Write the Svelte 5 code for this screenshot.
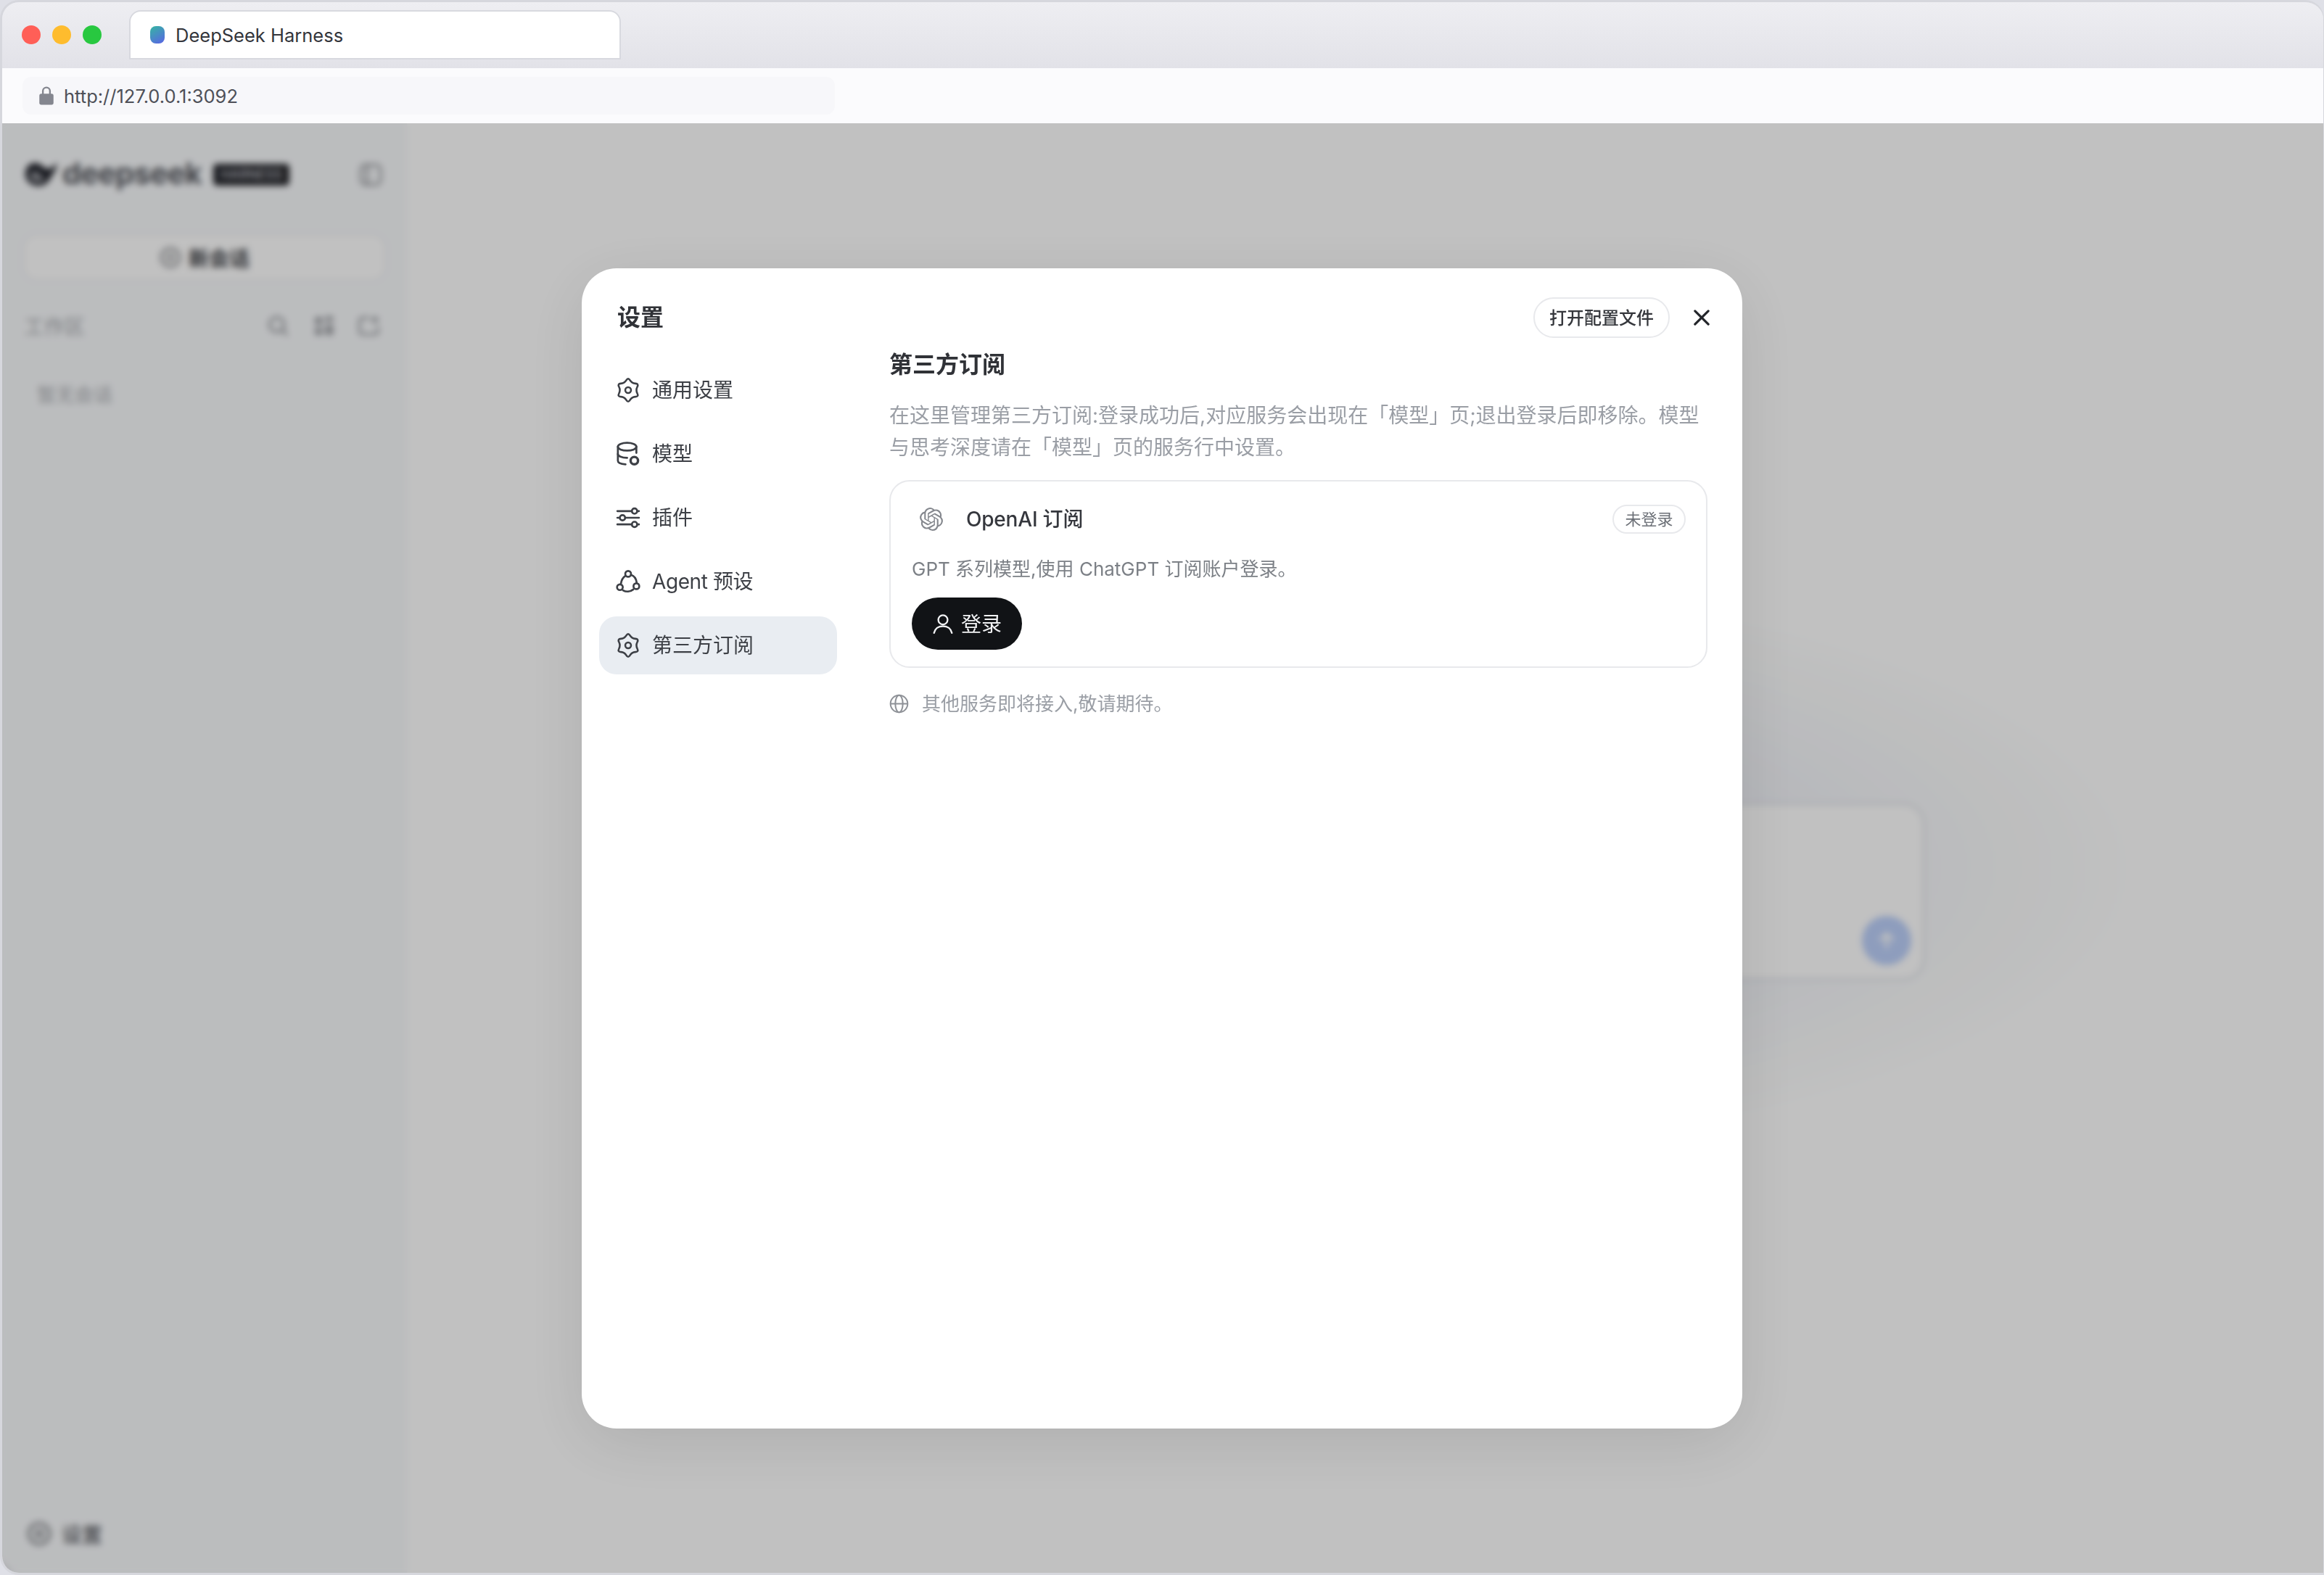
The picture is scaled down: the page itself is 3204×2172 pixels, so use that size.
<script>
  // six lobed settings outline, closed quadratic spline through tips and pinches
  const gearPath = (() => {
    const pts = [];
    for (let i = 0; i < 12; i++) {
      const r = i % 2 === 0 ? 12.6 : 7.6;
      const a = ((-90 + i * 30) * Math.PI) / 180;
      pts.push([12 + r * Math.cos(a) * 0.96, 12 + r * Math.sin(a)]);
    }
    const mid = (p, q) => [(p[0] + q[0]) / 2, (p[1] + q[1]) / 2];
    let start = mid(pts[11], pts[0]);
    let d = `M${start[0].toFixed(2)} ${start[1].toFixed(2)}`;
    pts.forEach((p, i) => {
      const m = mid(p, pts[(i + 1) % 12]);
      d += `Q${p[0].toFixed(2)} ${p[1].toFixed(2)} ${m[0].toFixed(2)} ${m[1].toFixed(2)}`;
    });
    return d + "Z";
  })();

  const openaiPath =
    "M22.2819 9.8211a5.9847 5.9847 0 0 0-.5157-4.9108 6.0462 6.0462 0 0 0-6.5098-2.9A6.0651 6.0651 0 0 0 4.9807 4.1818a5.9847 5.9847 0 0 0-3.9977 2.9 6.0462 6.0462 0 0 0 .7427 7.0966 5.98 5.98 0 0 0 .511 4.9107 6.051 6.051 0 0 0 6.5146 2.9001A5.9847 5.9847 0 0 0 13.2599 24a6.0557 6.0557 0 0 0 5.7718-4.2058 5.9894 5.9894 0 0 0 3.9977-2.9001 6.0557 6.0557 0 0 0-.7475-7.0729zm-9.022 12.6081a4.4755 4.4755 0 0 1-2.8764-1.0408l.1419-.0804 4.7783-2.7582a.7948.7948 0 0 0 .3927-.6813v-6.7369l2.02 1.1686a.071.071 0 0 1 .038.052v5.5826a4.504 4.504 0 0 1-4.4945 4.4944zm-9.6607-4.1254a4.4708 4.4708 0 0 1-.5346-3.0137l.142.0852 4.783 2.7582a.7712.7712 0 0 0 .7806 0l5.8428-3.3685v2.3324a.0804.0804 0 0 1-.0332.0615L9.74 19.9502a4.4992 4.4992 0 0 1-6.1408-1.6464zM2.3408 7.8956a4.485 4.485 0 0 1 2.3655-1.9728V11.6a.7664.7664 0 0 0 .3879.6765l5.8144 3.3543-2.0201 1.1685a.0757.0757 0 0 1-.071 0l-4.8303-2.7865A4.504 4.504 0 0 1 2.3408 7.872zm16.5963 3.8558L13.1038 8.364 15.1192 7.2a.0757.0757 0 0 1 .071 0l4.8303 2.7913a4.4944 4.4944 0 0 1-.6765 8.1042v-5.6772a.79.79 0 0 0-.407-.667zm2.0107-3.0231l-.142-.0852-4.7735-2.7818a.7759.7759 0 0 0-.7854 0L9.409 9.2297V6.8974a.0662.0662 0 0 1 .0284-.0615l4.8303-2.7866a4.4992 4.4992 0 0 1 6.6802 4.66zM8.3065 12.863l-2.02-1.1638a.0804.0804 0 0 1-.038-.0567V6.0742a4.4992 4.4992 0 0 1 7.3757-3.4537l-.142.0805L8.704 5.459a.7948.7948 0 0 0-.3927.6813zm1.0976-2.3654l2.602-1.4998 2.6069 1.4998v2.9994l-2.5974 1.4997-2.6067-1.4997Z";
</script>

{#snippet gear(cls)}
  <svg class={cls} viewBox="0 0 24 24" fill="none" stroke="currentColor" stroke-width="1.8">
    <path d={gearPath} />
    <circle cx="12" cy="12" r="2.8" />
  </svg>
{/snippet}

<div class="window">
  <header class="titlebar">
    <div class="lights">
      <span class="light red"></span>
      <span class="light yellow"></span>
      <span class="light green"></span>
    </div>
    <div class="tab">
      <span class="favicon"></span>
      <span>DeepSeek Harness</span>
    </div>
  </header>

  <div class="addressbar">
    <div class="urlfield">
      <svg class="lock" viewBox="0 0 20 24" fill="none">
        <path d="M5.500 11V6a4.500 4.500 0 0 1 9 0V11" stroke="#84868f" stroke-width="2.2" />
        <rect x="1" y="9.500" width="18" height="14" rx="2.500" fill="#84868f" />
      </svg>
      <span>http://127.0.0.1:3092</span>
    </div>
  </div>

  <div class="app">
    <aside class="sidebar">
      <div class="brand">
        <svg class="whale" viewBox="0 0 44 36">
          <path d="M1 15C2 6 9 1 17 3c5 1 8 6 12 7 5 1 9-3 14-8-1 8-4 14-8 18-3 10-13 15-22 12C5 30 0 23 1 15z" fill="#20222a" />
          <path d="M7 18c2-5 7-6 11-3 3 3 6 7 9 9-5 4-12 5-16 2-3-2-5-5-4-8z" fill="#8c8e94" />
        </svg>
        <span class="wordmark">deepseek</span>
        <span class="badge">HARNESS</span>
        <svg class="side-toggle" viewBox="0 0 24 24" fill="none" stroke="#8b8d92" stroke-width="2">
          <rect x="3" y="3" width="18" height="18" rx="4" />
          <path d="M9 3v18" />
        </svg>
      </div>
      <button class="new-chat">
        <svg viewBox="0 0 24 24" fill="none" stroke="#6d6f74" stroke-width="2.2">
          <circle cx="12" cy="12" r="10" />
          <path d="M12 8v8M8 12h8" />
        </svg>
        <span>新会话</span>
      </button>
      <div class="section-row">
        <span>工作区</span>
        <div class="section-tools">
          <svg viewBox="0 0 24 24" fill="none" stroke="#94969b" stroke-width="2.4">
            <circle cx="11" cy="11" r="7.500" />
            <path d="M17 17l5 5" />
          </svg>
          <svg viewBox="0 0 24 24" fill="#a0a2a7">
            <rect x="3" y="3" width="8" height="8" rx="2" />
            <rect x="14" y="2" width="8" height="6" rx="2" />
            <rect x="3" y="14" width="8" height="8" rx="2" />
            <rect x="14" y="11" width="8" height="11" rx="2" />
          </svg>
          <svg viewBox="0 0 24 24" fill="none" stroke="#94969b" stroke-width="2.4">
            <path d="M21 13v5a3 3 0 0 1-3 3H5a3 3 0 0 1-3-3V7a3 3 0 0 1 3-3h7" />
            <path d="M18 2v8M14 6h8" />
          </svg>
        </div>
      </div>
      <div class="empty">暂无会话</div>
      <div class="side-footer">
        <svg viewBox="0 0 24 24" fill="none" stroke="#6d6f74" stroke-width="2.4">
          <circle cx="12" cy="12" r="10" />
          <circle cx="12" cy="12" r="2.500" />
        </svg>
        <span>设置</span>
      </div>
    </aside>

    <main class="workspace">
      <div class="glow"></div>
      <div class="composer">
        <button class="send" aria-label="发送">
          <svg viewBox="0 0 24 24" fill="none" stroke="#fff" stroke-width="3">
            <path d="M12 20V5M5 12l7-7 7 7" />
          </svg>
        </button>
      </div>
    </main>

    <div class="overlay">
      <div class="modal">
        <nav class="nav">
          <h2>设置</h2>
          <div class="nav-list">
            <div class="nav-item">
              {@render gear("nav-icon")}
              <span>通用设置</span>
            </div>
            <div class="nav-item">
              <svg class="nav-icon" viewBox="0 0 24 24" fill="none" stroke="currentColor" stroke-width="1.9" stroke-linecap="round">
                <ellipse cx="11" cy="5" rx="9" ry="3.800" />
                <path d="M2 5v13.500c0 2 3 3.400 7.500 3.600" />
                <path d="M20 5v6" />
                <path d="M2 12c0 2 3.600 3.800 9 3.800" />
                <circle cx="18" cy="18.500" r="3.600" stroke-width="2.400" />
              </svg>
              <span>模型</span>
            </div>
            <div class="nav-item">
              <svg class="nav-icon" viewBox="0 0 24 24" fill="none" stroke="currentColor" stroke-width="1.9" stroke-linecap="round">
                <path d="M1.500 5.500h14M21 5.500h1.500M1.500 18.500h14M21 18.500h1.500M9.500 12h13M1.500 12h2" />
                <circle cx="18.200" cy="5.500" r="2.600" />
                <circle cx="6.500" cy="12" r="2.600" />
                <circle cx="18.200" cy="18.500" r="2.600" />
              </svg>
              <span>插件</span>
            </div>
            <div class="nav-item agent">
              <svg class="nav-icon" viewBox="0 0 24 24" fill="none" stroke="currentColor" stroke-width="1.9" stroke-linecap="round">
                <circle cx="12" cy="4.500" r="2.800" />
                <circle cx="4" cy="17.500" r="2.800" />
                <circle cx="20" cy="16.500" r="2.800" />
                <path d="M9.300 6.500C7 8 5.500 10.500 5 14M14.800 5.500c3 1 5 3.500 5.500 7.500M7 20.500c3 1.800 7 1.600 10-.8" />
              </svg>
              <span>Agent 预设</span>
            </div>
            <div class="nav-item active">
              {@render gear("nav-icon")}
              <span>第三方订阅</span>
            </div>
          </div>
        </nav>

        <section class="pane">
          <div class="toolbar">
            <button class="open-config">打开配置文件</button>
            <button class="close" aria-label="关闭">
              <svg viewBox="0 0 24 24" fill="none" stroke="currentColor" stroke-width="3.400" stroke-linecap="round">
                <path d="M2 2l20 20M22 2L2 22" />
              </svg>
            </button>
          </div>
          <h3>第三方订阅</h3>
          <p class="intro">在这里管理第三方订阅:登录成功后,对应服务会出现在「模型」页;退出登录后即移除。模型与思考深度请在「模型」页的服务行中设置。</p>

          <div class="card">
            <div class="card-head">
              <svg class="openai" viewBox="0 0 24 24" fill="#85888e"><path d={openaiPath} /></svg>
              <span class="card-title">OpenAI 订阅</span>
              <span class="status">未登录</span>
            </div>
            <p class="card-desc">GPT 系列模型,使用 ChatGPT 订阅账户登录。</p>
            <button class="login">
              <svg viewBox="0 0 24 24" fill="none" stroke="currentColor" stroke-width="2" stroke-linecap="round">
                <circle cx="12" cy="7.500" r="5.500" />
                <path d="M1.500 23c1-5 5-8 10.500-8s9.500 3 10.500 8" />
              </svg>
              <span>登录</span>
            </button>
          </div>

          <div class="more">
            <svg viewBox="0 0 24 24" fill="none" stroke="currentColor" stroke-width="1.800">
              <circle cx="12" cy="12" r="10.500" />
              <ellipse cx="12" cy="12" rx="4.600" ry="10.500" />
              <path d="M1.500 12h21" />
            </svg>
            <span>其他服务即将接入,敬请期待。</span>
          </div>
        </section>
      </div>
    </div>
  </div>
</div>

<style>
  :global(body) {
    background: #dfe0e7;
    font-family: Inter, "Noto Sans CJK SC", sans-serif;
  }

  .window {
    height: 2172px;
    display: flex;
    flex-direction: column;
    border-radius: 26px 26px 0 26px;
    border: 3px solid #d6d7dd;
    border-width: 3px 1px 3px 3px;
    box-sizing: border-box;
    overflow: hidden;
  }

  .titlebar {
    height: 91px;
    flex: none;
    display: flex;
    align-items: flex-end;
    background: linear-gradient(#eeeef2, #e2e2e8);
    padding-left: 27px;
    box-sizing: border-box;
  }

  .lights {
    display: flex;
    gap: 16px;
    align-self: center;
    margin-right: 38px;
    margin-top: -2px;
  }

  .light {
    width: 26px;
    height: 26px;
    border-radius: 50%;
  }

  .red {
    background: #ff5f57;
  }

  .yellow {
    background: #febc2e;
  }

  .green {
    background: #28c840;
  }

  .tab {
    width: 678px;
    height: 68px;
    margin-bottom: 12px;
    box-sizing: border-box;
    border: 2px solid #d8d9df;
    border-radius: 16px 16px 0 0;
    background: #fff;
    display: flex;
    align-items: center;
    gap: 15px;
    padding-left: 27px;
    font-size: 25.5px;
    color: #33353b;
  }

  .favicon {
    width: 20px;
    height: 24px;
    border-radius: 8px;
    background: linear-gradient(150deg, #35b6a2, #5a63e6);
  }

  .addressbar {
    height: 76px;
    flex: none;
    background: #fbfbfd;
    padding: 12px 0 12px 28px;
    box-sizing: border-box;
  }

  .urlfield {
    width: 1120px;
    height: 52px;
    border-radius: 12px;
    background: #f7f7fa;
    display: flex;
    align-items: center;
    gap: 13px;
    padding-left: 22px;
    box-sizing: border-box;
    font-size: 25.5px;
    color: #4e5058;
  }

  .lock {
    width: 22px;
    height: 26px;
  }

  .app {
    flex: 1;
    min-height: 0;
    display: flex;
    position: relative;
  }

  .sidebar {
    width: 558px;
    flex: none;
    background: #f8fafc;
    box-sizing: border-box;
    padding: 0 28px 34px;
    display: flex;
    flex-direction: column;
  }

  .brand {
    height: 142px;
    flex: none;
    display: flex;
    align-items: center;
    padding-left: 3px;
  }

  .whale {
    width: 46px;
    height: 42px;
    margin-right: 6px;
  }

  .wordmark {
    font-size: 41px;
    font-weight: 700;
    letter-spacing: -0.5px;
    color: #55575e;
    margin-top: -4px;
  }

  .badge {
    margin-left: 16px;
    width: 105px;
    height: 30px;
    border-radius: 5px;
    background: #24252a;
    color: #dcdee3;
    font-size: 18px;
    text-align: center;
    line-height: 30px;
  }

  .side-toggle {
    width: 36px;
    height: 36px;
    margin-left: auto;
    margin-right: 4px;
  }

  .new-chat {
    height: 66px;
    margin-top: 10px;
    flex: none;
    border: 2px solid #eaebef;
    border-radius: 20px;
    background: #fff;
    display: flex;
    align-items: center;
    justify-content: center;
    gap: 10px;
    font: inherit;
    font-size: 28px;
    font-weight: 600;
    color: #3c3e44;
  }

  .new-chat svg {
    width: 30px;
    height: 30px;
  }

  .section-row {
    margin-top: 31px;
    height: 60px;
    flex: none;
    display: flex;
    align-items: center;
    justify-content: space-between;
    font-size: 28px;
    color: #a3a5aa;
    padding-left: 2px;
  }

  .section-tools {
    display: flex;
    gap: 31px;
    margin-right: 8px;
  }

  .section-tools svg {
    width: 32px;
    height: 32px;
  }

  .empty {
    margin-top: 45px;
    padding-left: 20px;
    font-size: 26px;
    color: #a9abb0;
  }

  .side-footer {
    margin-top: auto;
    padding-left: 6px;
    display: flex;
    align-items: center;
    gap: 14px;
    font-size: 28px;
    font-weight: 500;
    color: #55575d;
  }

  .side-footer svg {
    width: 34px;
    height: 34px;
  }

  .workspace {
    flex: 1;
    background: #fff;
    display: flex;
    justify-content: center;
    padding-top: 937px;
    position: relative;
    overflow: hidden;
  }

  .glow {
    position: absolute;
    left: 250px;
    top: 627px;
    width: 2140px;
    height: 800px;
    border-radius: 50%;
    background: radial-gradient(closest-side, rgba(120, 135, 190, 0.1) 55%, rgba(130, 160, 170, 0.035) 85%, transparent);
  }

  .composer {
    width: 1544px;
    height: 245px;
    box-sizing: border-box;
    border-radius: 30px;
    background: #fff;
    border: 3px dashed #cdd2dd;
    position: relative;
    display: flex;
    justify-content: flex-end;
    align-items: flex-end;
    padding: 0 16px 18px 0;
  }

  .send {
    width: 68px;
    height: 68px;
    border: 0;
    border-radius: 50%;
    background: #bcd0fa;
    padding: 18px;
    display: flex;
  }

  .overlay {
    position: absolute;
    inset: 0;
    padding-right: 2px;
    background: rgba(0, 0, 0, 0.243);
    backdrop-filter: blur(5px);
    display: flex;
    align-items: center;
    justify-content: center;
  }

  .modal {
    width: 1600px;
    height: 1600px;
    background: #fff;
    border-radius: 48px;
    display: flex;
    box-shadow: 0 20px 90px rgba(0, 0, 0, 0.1);
    color: #2b2d33;
  }

  .nav {
    width: 376px;
    flex: none;
    box-sizing: border-box;
    padding: 40px 24px;
  }

  h2,
  h3 {
    margin: 0;
    font-size: 32px;
    font-weight: 600;
    color: #303237;
  }

  h2 {
    height: 56px;
    line-height: 56px;
    padding-left: 25px;
  }

  .nav-list {
    margin-top: 32px;
    display: flex;
    flex-direction: column;
    gap: 8px;
  }

  .nav-item {
    height: 80px;
    display: flex;
    align-items: center;
    gap: 16px;
    padding-left: 23px;
    border-radius: 24px;
    font-size: 28px;
    color: #3d4046;
  }

  .nav-item span {
    padding-bottom: 4px;
  }

  .nav-item.agent span {
    letter-spacing: -0.4px;
  }

  .nav-item.active {
    background: #e9edf2;
  }

  .nav :global(.nav-icon) {
    width: 34px;
    height: 34px;
    flex: none;
  }

  .pane {
    flex: 1;
    min-width: 0;
    box-sizing: border-box;
    padding: 40px 48px;
  }

  .toolbar {
    height: 56px;
    margin-right: -14px;
    display: flex;
    justify-content: flex-end;
    align-items: center;
    gap: 22px;
  }

  .open-config {
    width: 188px;
    height: 56px;
    padding: 0 0 3px;
    border: 2px solid #e8e9ec;
    border-radius: 28px;
    background: #fff;
    font: inherit;
    font-size: 24px;
    font-weight: 500;
    color: #35373c;
  }

  .close {
    width: 44px;
    height: 44px;
    padding: 11px;
    border: 0;
    background: none;
    color: #222429;
    display: flex;
  }

  h3 {
    margin-top: 15px;
    line-height: 44px;
  }

  .intro {
    margin: 26px 0 23px;
    font-size: 28px;
    line-height: 44px;
    color: #9a9ea5;
  }

  .card {
    box-sizing: border-box;
    height: 259px;
    border: 2px solid #e8e9ec;
    border-radius: 28px;
    padding: 32px 28px 0 29px;
  }

  .card-head {
    height: 40px;
    display: flex;
    align-items: center;
  }

  .openai {
    width: 32px;
    height: 32px;
    margin-left: 11px;
    margin-right: 32px;
  }

  .card-title {
    font-size: 28px;
    font-weight: 500;
    letter-spacing: -0.2px;
    color: #35373d;
    padding-bottom: 3px;
  }

  .status {
    margin-left: auto;
    width: 101px;
    height: 40px;
    box-sizing: border-box;
    border: 2px solid #e8e9ec;
    border-radius: 20px;
    font-size: 22px;
    line-height: 36px;
    text-align: center;
    color: #6b6f76;
  }

  .card-desc {
    margin: 31px 0 0;
    font-size: 26px;
    line-height: 36px;
    color: #7c8086;
  }

  .login {
    margin-top: 21px;
    width: 152px;
    height: 72px;
    padding: 0 0 0 29px;
    border: 0;
    border-radius: 36px;
    background: #111316;
    color: #f2f3f5;
    display: flex;
    align-items: center;
    gap: 11px;
    font: inherit;
    font-size: 28px;
  }

  .login span {
    padding-bottom: 2px;
  }

  .login svg {
    width: 28px;
    height: 28px;
  }

  .more {
    margin-top: 32px;
    display: flex;
    align-items: center;
    gap: 18px;
    font-size: 26px;
    line-height: 36px;
    color: #9a9ea5;
  }

  .more svg {
    width: 27px;
    height: 27px;
    color: #8e9197;
  }
</style>
